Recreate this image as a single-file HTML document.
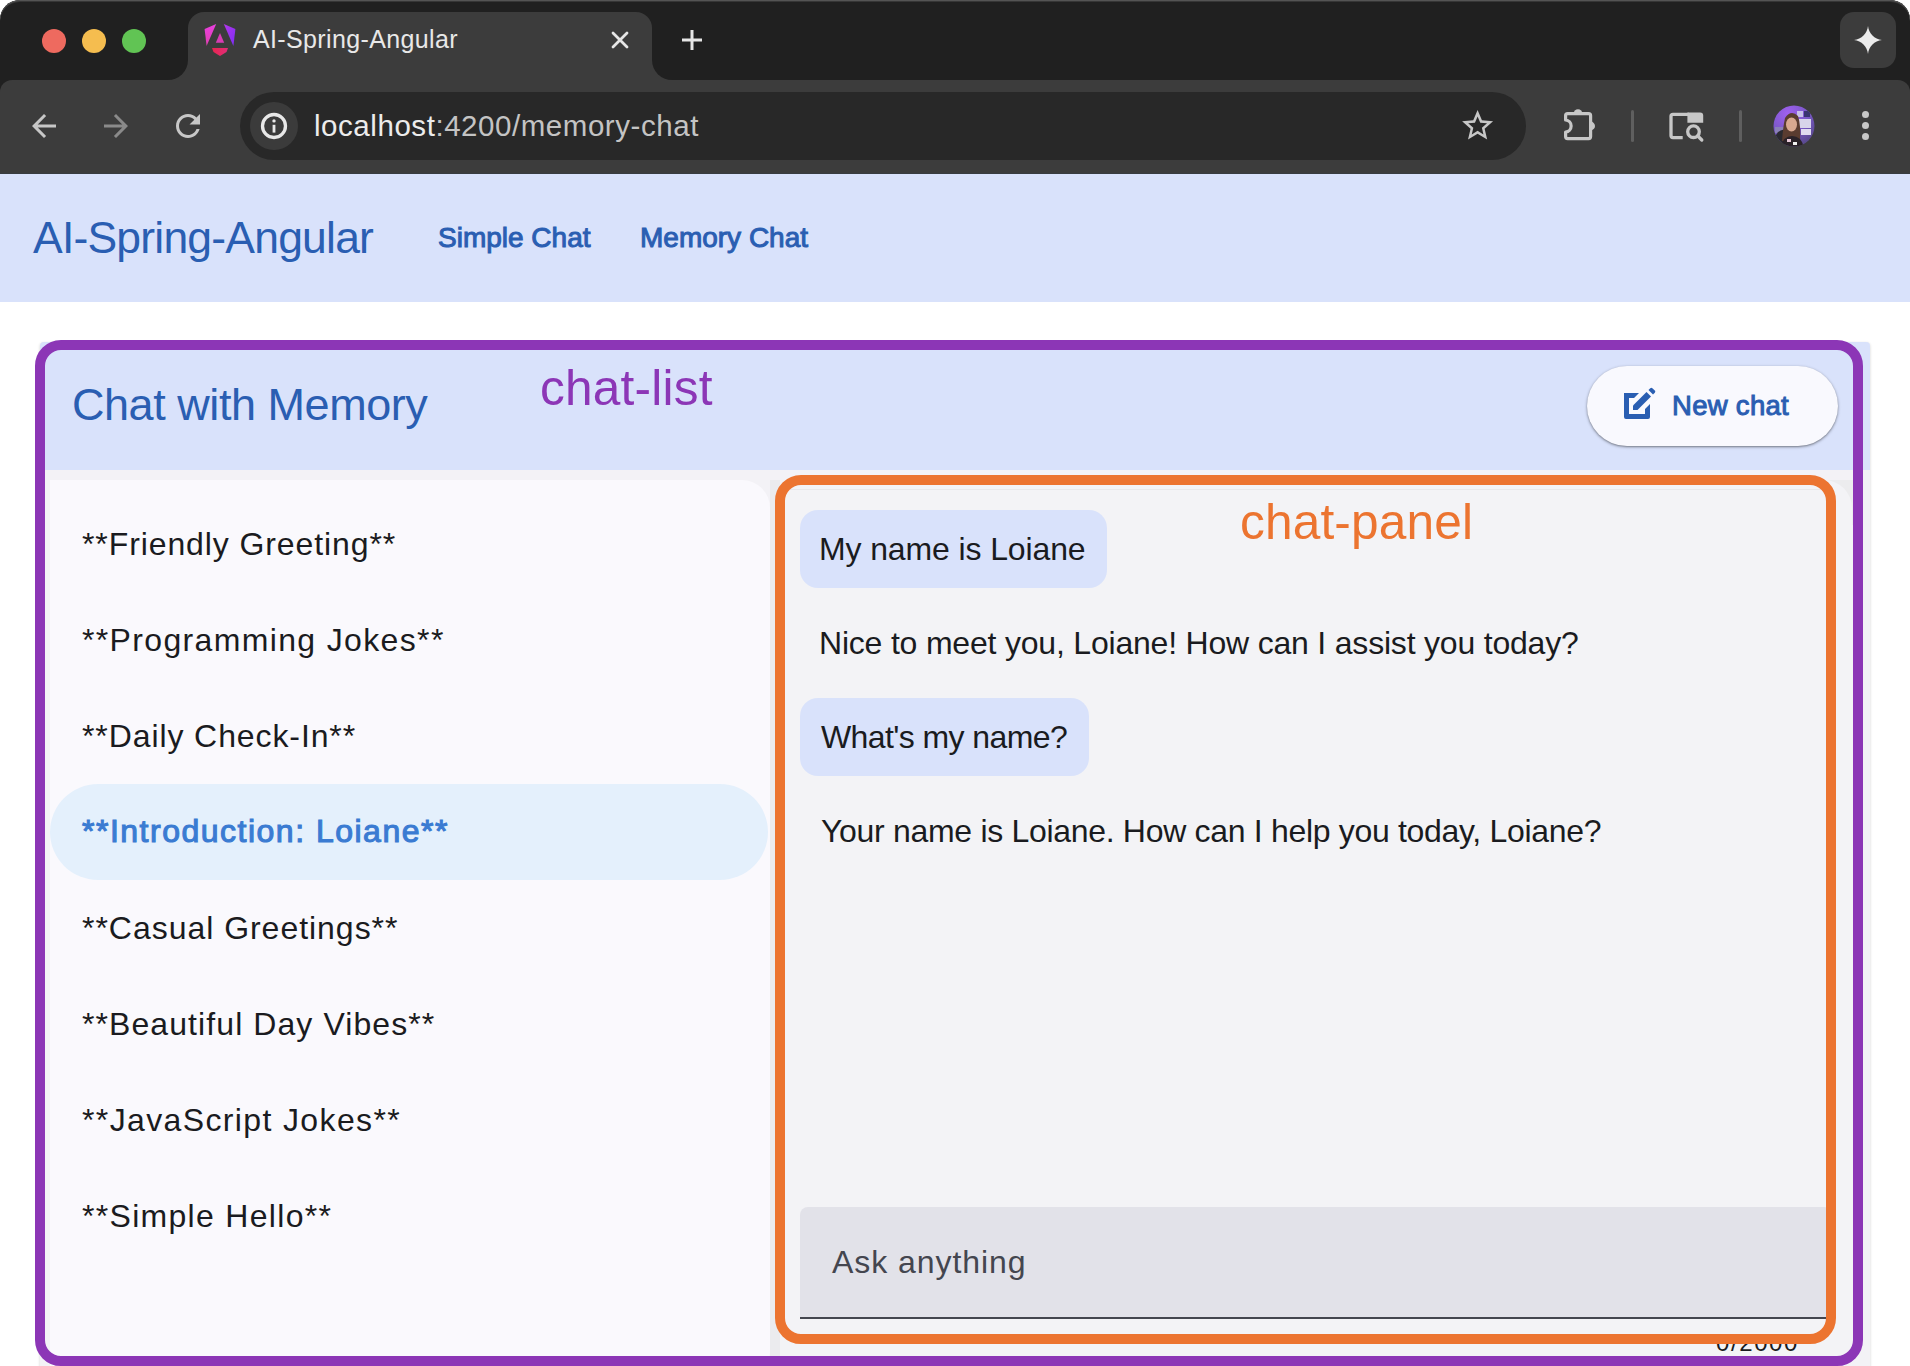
<!DOCTYPE html>
<html><head><meta charset="utf-8">
<style>
*{box-sizing:border-box;margin:0;padding:0}
html,body{width:1910px;height:1366px;overflow:hidden;background:#fff;font-family:"Liberation Sans",sans-serif}
.a{position:absolute}
.t{position:absolute;white-space:nowrap;line-height:1}
.li{left:82px;font-size:32px;color:#1a1b20;letter-spacing:0.9px}
.sel{color:#3a7bd2;-webkit-text-stroke:1.1px #3a7bd2;letter-spacing:1.5px}
.msg{left:821px;font-size:32px;color:#1a1b20;letter-spacing:-0.6px}
</style></head><body>
<!-- ===== Browser chrome ===== -->
<div class="a" id="win" style="left:0;top:0;width:1910px;height:174px;background:#202020;border-radius:20px 20px 0 0;box-shadow:inset 0 1px 0 #545454,inset 0 2px 0 #363636"></div>
<!-- traffic lights -->
<div class="a" style="left:42px;top:29px;width:24px;height:24px;border-radius:50%;background:#ee6a5f"></div>
<div class="a" style="left:82px;top:29px;width:24px;height:24px;border-radius:50%;background:#f5bd4f"></div>
<div class="a" style="left:122px;top:29px;width:24px;height:24px;border-radius:50%;background:#61c454"></div>
<!-- tab -->
<div class="a" style="left:188px;top:12px;width:464px;height:70px;background:#3c3c3c;border-radius:16px 16px 0 0"></div>
<div class="a" style="left:168px;top:60px;width:20px;height:20px;background:#3c3c3c"></div>
<div class="a" style="left:148px;top:40px;width:40px;height:40px;background:#202020;border-radius:0 0 20px 0"></div>
<div class="a" style="left:652px;top:60px;width:20px;height:20px;background:#3c3c3c"></div>
<div class="a" style="left:652px;top:40px;width:40px;height:40px;background:#202020;border-radius:0 0 0 20px"></div>
<!-- toolbar -->
<div class="a" style="left:0;top:80px;width:1910px;height:94px;background:#3c3c3c;border-radius:12px 12px 0 0"></div>
<div class="a" style="left:188px;top:60px;width:464px;height:30px;background:#3c3c3c"></div>

<!-- angular favicon -->
<svg class="a" style="left:200px;top:20px" width="40" height="40" viewBox="0 0 40 40">
<defs><linearGradient id="gl" x1="0" y1="0" x2="0" y2="1"><stop offset="0" stop-color="#ea3fe0"/><stop offset="1" stop-color="#e040b0"/></linearGradient>
<linearGradient id="gr" x1="0" y1="0" x2="1" y2="1"><stop offset="0" stop-color="#b637e8"/><stop offset="1" stop-color="#7a2cf6"/></linearGradient>
<linearGradient id="gb" x1="0" y1="0" x2="1" y2="0"><stop offset="0" stop-color="#e8264f"/><stop offset="1" stop-color="#e02d7a"/></linearGradient></defs>
<path d="M4.6,9 L16.2,4 L6.6,26 Z" fill="url(#gl)"/>
<path d="M23.8,4 L35.4,9 L33.4,26 Z" fill="url(#gr)"/>
<path d="M20,13 L24.2,22.8 L15.8,22.8 Z" fill="#d83cb4"/>
<path d="M12,28 L28,28 L26.5,32 L20,36 L13.5,32 Z" fill="url(#gb)"/>
</svg>
<div class="t" style="left:253px;top:27px;font-size:25px;color:#e8e8e8;letter-spacing:0.37px">AI-Spring-Angular</div>
<!-- close x -->
<svg class="a" style="left:611px;top:31px" width="18" height="18" viewBox="0 0 18 18"><path d="M2,2 L16,16 M16,2 L2,16" stroke="#e6e6e6" stroke-width="2.8" stroke-linecap="round"/></svg>
<!-- plus -->
<svg class="a" style="left:681px;top:29px" width="22" height="22" viewBox="0 0 22 22"><path d="M11,1 V21 M1,11 H21" stroke="#e6e6e6" stroke-width="3"/></svg>
<!-- gemini button -->
<div class="a" style="left:1840px;top:12px;width:56px;height:56px;border-radius:14px;background:#3c3c3c"></div>
<svg class="a" style="left:1854px;top:26px" width="28" height="28" viewBox="0 0 28 28"><path d="M14,0 C14.8,7.5 20.5,13.2 28,14 C20.5,14.8 14.8,20.5 14,28 C13.2,20.5 7.5,14.8 0,14 C7.5,13.2 13.2,7.5 14,0 Z" fill="#ececec"/></svg>
<!-- nav icons -->
<svg class="a" style="left:26px;top:108px" width="36" height="36" viewBox="0 0 24 24"><path d="M20 11H7.83l5.59-5.59L12 4l-8 8 8 8 1.41-1.41L7.83 13H20v-2z" fill="#c7c7c7"/></svg>
<svg class="a" style="left:98px;top:108px" width="36" height="36" viewBox="0 0 24 24"><path d="M12 4l-1.41 1.41L16.17 11H4v2h12.17l-5.58 5.59L12 20l8-8z" fill="#8a8a8a"/></svg>
<svg class="a" style="left:170px;top:108px" width="36" height="36" viewBox="0 0 24 24"><path d="M17.65 6.35C16.2 4.9 14.21 4 12 4c-4.42 0-7.99 3.58-7.99 8s3.57 8 7.99 8c3.73 0 6.84-2.55 7.730-6h-2.08c-.82 2.33-3.04 4-5.650 4-3.31 0-6-2.69-6-6s2.69-6 6-6c1.66 0 3.14.69 4.22 1.78L13 11h7V4l-2.35 2.35z" fill="#c7c7c7"/></svg>
<!-- omnibox -->
<div class="a" style="left:240px;top:92px;width:1286px;height:68px;border-radius:34px;background:#282828"></div>
<div class="a" style="left:250px;top:102px;width:48px;height:48px;border-radius:50%;background:#3b3b3b"></div>
<svg class="a" style="left:254px;top:106px" width="40" height="40" viewBox="0 0 40 40"><circle cx="20" cy="20" r="11.5" stroke="#e8e8e8" stroke-width="3.3" fill="none"/><circle cx="20" cy="14.9" r="1.7" fill="#e8e8e8"/><rect x="18.6" y="18.8" width="2.8" height="7.8" fill="#e8e8e8"/></svg>
<div class="t" style="left:314px;top:111px;font-size:29.5px;color:#ececec;letter-spacing:0.55px">localhost<span style="color:#c4c4c4">:4200/memory-chat</span></div>
<!-- star -->
<svg class="a" style="left:1459.3px;top:107.4px" width="37.2" height="37.2" viewBox="0 0 24 24"><path d="M22 9.24l-7.19-.62L12 2 9.19 8.63 2 9.24l5.46 4.73L5.82 21 12 17.270 18.18 21l-1.63-7.03L22 9.24zM12 15.4l-3.76 2.27 1-4.28-3.32-2.88 4.38-.38L12 6.1l1.71 4.04 4.38.38-3.320 2.88 1 4.28L12 15.4z" fill="#c7c7c7"/></svg>
<!-- puzzle -->
<svg class="a" style="left:1550px;top:100px" width="60" height="50" viewBox="1550 100 60 50"><path d="M1565.6,120 V115.6 A2,2 0 0 1 1567.6,113.6 H1588.6 A2,2 0 0 1 1590.6,115.6 V136.6 A2,2 0 0 1 1588.6,138.6 H1567.6 A2,2 0 0 1 1565.6,136.6 V132 A6.02,6.02 0 0 0 1565.6,120 Z" stroke="#c7c7c7" stroke-width="3.2" fill="none" stroke-linejoin="round"/><path d="M1573.6,113.6 A4.4,4.4 0 0 1 1582.4,113.6 Z" fill="#c7c7c7"/><path d="M1590.6,121.6 A4.4,4.4 0 0 1 1590.6,130.4 Z" fill="#c7c7c7"/></svg>
<div class="a" style="left:1630.5px;top:110px;width:3.5px;height:31.5px;border-radius:2px;background:#5f5f5f"></div>
<!-- tab search -->
<svg class="a" style="left:1660px;top:105px" width="50" height="45" viewBox="1660 105 50 45"><path d="M1682.7,137.6 H1673 A2,2 0 0 1 1671,135.6 V116.3 A2,2 0 0 1 1673,114.3 H1689" stroke="#c7c7c7" stroke-width="3.3" fill="none"/><path d="M1687.4,112.6 H1700.2 A3,3 0 0 1 1703.2,115.6 V122.7 H1687.4 Z" fill="#c7c7c7"/><circle cx="1693.5" cy="131.7" r="5.8" stroke="#c7c7c7" stroke-width="3.3" fill="none"/><path d="M1697.8,136 L1701.8,140" stroke="#c7c7c7" stroke-width="3.3" stroke-linecap="round"/></svg>
<div class="a" style="left:1738.5px;top:110px;width:3.5px;height:31.5px;border-radius:2px;background:#5f5f5f"></div>
<!-- avatar -->
<svg class="a" style="left:1773px;top:105px" width="42" height="42" viewBox="0 0 42 42">
<defs><clipPath id="cc"><circle cx="21" cy="21" r="20.5"/></clipPath>
<radialGradient id="pbg" cx="0.35" cy="0.2" r="0.8"><stop offset="0" stop-color="#a060f0"/><stop offset="0.6" stop-color="#7a58c8"/><stop offset="1" stop-color="#5a4a90"/></radialGradient></defs>
<g clip-path="url(#cc)">
<rect width="42" height="42" fill="url(#pbg)"/>
<rect x="24" y="6" width="6" height="6" fill="#c8c0e8"/><rect x="31" y="6" width="6" height="6" fill="#3a3470"/>
<rect x="26" y="14" width="12" height="9" fill="#d8d4ea"/><rect x="28" y="24" width="10" height="6" fill="#e0dcf0"/>
<rect x="2" y="22" width="12" height="6" fill="#8a80b8"/>
<path d="M3,30 Q8,22 14,26 L12,42 H0 Z" fill="#2a2a30"/>
<path d="M12,13 Q18,4 25,11 Q28,20 27,36 L9,36 Q10,22 12,13 Z" fill="#5a3c30"/>
<ellipse cx="18.5" cy="19.5" rx="5.5" ry="7" fill="#d8a890"/>
<path d="M8,42 Q10,31 19,31 Q28,31 31,42 Z" fill="#2a2228"/>
<rect x="14" y="34" width="4" height="3" fill="#e8c8d8"/><rect x="20" y="37" width="4" height="3" fill="#f0f0f0"/>
</g></svg>
<!-- kebab -->
<div class="a" style="left:1862px;top:111px;width:7px;height:7px;border-radius:50%;background:#c8c8c8"></div>
<div class="a" style="left:1862px;top:122px;width:7px;height:7px;border-radius:50%;background:#c8c8c8"></div>
<div class="a" style="left:1862px;top:133px;width:7px;height:7px;border-radius:50%;background:#c8c8c8"></div>
<!-- page -->
<div class="a" style="left:0;top:174px;width:1910px;height:1192px;background:#fff"></div>
<div class="a" style="left:0;top:174px;width:1910px;height:128px;background:#d9e2fb"></div>
<div class="a" style="left:0;top:173px;width:1910px;height:1px;background:#383c40"></div>
<div class="t" style="left:33px;top:216px;font-size:44.5px;color:#2a5eb2;letter-spacing:-0.8px">AI-Spring-Angular</div>
<div class="t" style="left:438px;top:224px;font-size:28px;-webkit-text-stroke:1px #2a5eb2;color:#2a5eb2;letter-spacing:0px">Simple Chat</div>
<div class="t" style="left:640px;top:224px;font-size:28px;-webkit-text-stroke:1px #2a5eb2;color:#2a5eb2;letter-spacing:0px">Memory Chat</div>
<!-- card -->
<div class="a" style="left:40px;top:342px;width:1830px;height:1040px;background:#f3f2f6;border-radius:4px;box-shadow:0 1px 3px rgba(0,0,0,.18)"></div>
<div class="a" style="left:40px;top:342px;width:1830px;height:128px;background:#d9e2fb;border-radius:4px 4px 0 0"></div>
<div class="t" style="left:72px;top:382px;font-size:45px;color:#2a5eb2;letter-spacing:-0.45px">Chat with Memory</div>
<!-- new chat button -->
<div class="a" style="left:1587px;top:366px;width:251px;height:80px;border-radius:40px;background:#f9f9fe;box-shadow:0 1px 2px rgba(0,0,0,.35),0 1px 3px 1px rgba(0,0,0,.12)"></div>
<svg class="a" style="left:1622px;top:387px" width="34" height="34" viewBox="0 0 34 34"><path d="M2,6 H17 L12,11 H7 V27 H23 V22 L28,17 V30 A2,2 0 0 1 26,32 H4 A2,2 0 0 1 2,30 Z" fill="#2a5eb2"/><path d="M11,18.5 L24.5,5 L29,9.5 L15.5,23 H11 Z" fill="#2a5eb2"/><path d="M26.5,3 L28.3,1.2 A1.5,1.5 0 0 1 30.4,1.2 L32.8,3.6 A1.5,1.5 0 0 1 32.8,5.7 L31,7.5 Z" fill="#2a5eb2"/></svg>
<div class="t" style="left:1672px;top:392px;font-size:27.5px;-webkit-text-stroke:1px #2a5eb2;color:#2a5eb2;letter-spacing:0.3px">New chat</div>
<!-- list panel -->
<div class="a" style="left:50px;top:480px;width:720px;height:900px;background:#faf9fd;border-radius:0 28px 28px 0"></div>
<div class="a" style="left:770px;top:480px;width:10px;height:900px;background:#ebebee"></div>
<div class="a" style="left:50px;top:784px;width:718px;height:96px;border-radius:48px;background:#e4f0fc"></div>
<div class="t li" style="top:528px">**Friendly Greeting**</div>
<div class="t li" style="top:624px;letter-spacing:1.35px">**Programming Jokes**</div>
<div class="t li" style="top:720px">**Daily Check-In**</div>
<div class="t li sel" style="top:815px">**Introduction: Loiane**</div>
<div class="t li" style="top:912px;letter-spacing:0.97px">**Casual Greetings**</div>
<div class="t li" style="top:1008px;letter-spacing:1.08px">**Beautiful Day Vibes**</div>
<div class="t li" style="top:1104px;letter-spacing:1.37px">**JavaScript Jokes**</div>
<div class="t li" style="top:1200px;letter-spacing:1.3px">**Simple Hello**</div>
<!-- chat panel -->
<div class="a" style="left:1815px;top:480px;width:38px;height:45px;background:#ececee"></div>
<div class="a" style="left:780px;top:480px;width:1072px;height:900px;background:#f3f3f6;border-radius:28px 28px 0 0"></div>
<div class="a" style="left:790px;top:489px;width:1040px;height:1px;background:#e8e8ea"></div>
<div class="a" style="left:800px;top:510px;width:307px;height:78px;border-radius:18px;background:#d9e2fb"></div>
<div class="t msg" style="top:533px;left:819px;letter-spacing:-0.12px">My name is Loiane</div>
<div class="t msg" style="top:627px;left:819px;letter-spacing:-0.2px">Nice to meet you, Loiane! How can I assist you today?</div>
<div class="a" style="left:800px;top:698px;width:289px;height:78px;border-radius:18px;background:#d9e2fb"></div>
<div class="t msg" style="top:721px;letter-spacing:-0.6px">What's my name?</div>
<div class="t msg" style="top:815px;letter-spacing:-0.31px">Your name is Loiane. How can I help you today, Loiane?</div>
<!-- input -->
<div class="a" style="left:800px;top:1207px;width:1032px;height:112px;border-radius:8px 8px 0 0;background:#e2e2e9;border-bottom:2px solid #44464f"></div>
<div class="t" style="left:832px;top:1246px;font-size:32px;color:#44464f;letter-spacing:0.95px">Ask anything</div>
<div class="t" style="left:1716px;top:1331px;font-size:24px;color:#1a1b20;letter-spacing:1.6px">0/2000</div>
<!-- annotations -->
<div class="a" style="left:35px;top:340px;width:1828px;height:1026px;border:10px solid #8c36b6;border-radius:26px"></div>
<div class="a" style="left:775px;top:475px;width:1061px;height:869px;border:10px solid #ec7430;border-radius:26px"></div>
<div class="t" style="left:540px;top:364px;font-size:49.6px;color:#8c36b6;letter-spacing:0.2px">chat-list</div>
<div class="t" style="left:1240px;top:498px;font-size:49.6px;color:#ec7430;letter-spacing:0.15px">chat-panel</div>
</body></html>
